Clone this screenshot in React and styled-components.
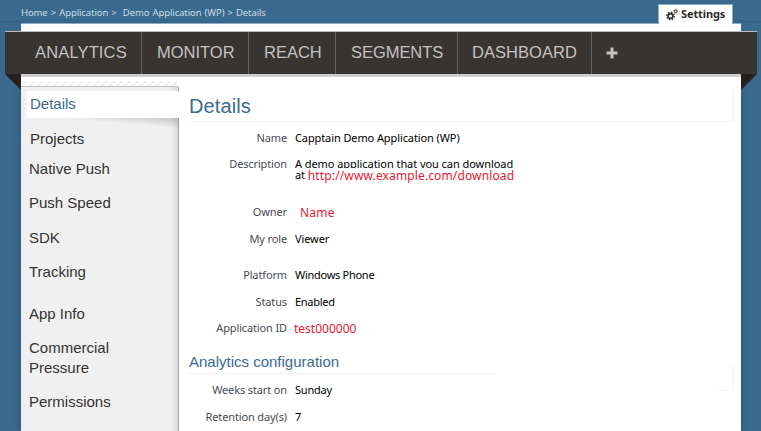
import React from 'react';
import styled, { createGlobalStyle } from 'styled-components';

const GlobalStyle = createGlobalStyle`
  * { box-sizing: border-box; }
  body { margin: 0; background: #3a6b8f; overflow: hidden; }
`;

const Screen = styled.div`
  width: 761px;
  height: 431px;
  overflow: hidden;
  display: flex;
  flex-direction: column;
  background: #3a6b8f;
  font-family: "Liberation Sans", Arial, sans-serif;
  color: #333;
`;

const TopBar = styled.header`
  height: 23px;
  flex: none;
  display: flex;
  justify-content: space-between;
  padding: 0 28px 0 21px;
  background: linear-gradient(#3a6b8f 19px, #34628a);
`;

const Breadcrumb = styled.nav`
  padding-top: 6px;
  font: 9.5px/14px "Noto Sans", sans-serif;
  color: #cbdbe6;
  white-space: pre;
  letter-spacing: -0.1px;
  word-spacing: 0.75px;
`;

const SettingsTab = styled.a`
  position: relative;
  z-index: 1;
  width: 75px;
  height: 20px;
  margin-top: 4px;
  display: flex;
  align-items: center;
  gap: 2px;
  padding-left: 7px;
  background: #fff;
  border: solid #8badc5;
  border-width: 1px 1px 0;
  font: bold 11px/18px "Noto Sans", sans-serif;
  letter-spacing: -0.1px;
  color: #2d2b2b;
`;

const TabText = styled.span`
  margin-top: -2px;
`;

const PageTop = styled.div`
  height: 8px;
  flex: none;
  margin: 0 20px 0 21px;
  background: #fff;
  border-top: 1px solid #8badc5;
`;

const Ribbon = styled.nav`
  position: relative;
  height: 43px;
  flex: none;
  margin: 0 4px 0 5px;
  padding-left: 8px;
  display: flex;
  background: #373432;
  border-top: 1px solid #b9bcbe;
`;

const RibbonItem = styled.a`
  width: ${p => p.$width}px;
  padding-left: ${p => p.$pad || 15}px;
  border-right: ${p => (p.$last ? '0' : '1px solid #686664')};
  font-size: 16.5px;
  line-height: 41px;
  letter-spacing: ${p => p.$spacing || 0}px;
  color: #c4c2c1;
  white-space: nowrap;
`;

const PlusIcon = styled.svg`
  display: block;
  margin-top: 15px;
`;

const Fold = styled.svg`
  position: absolute;
  top: 42px;
  ${p => p.$side}: 0;
`;

const Page = styled.main`
  flex: 1;
  margin: 0 20px 0 21px;
  display: flex;
  background: #fff;
  border-top: 3px solid #d0cfcf;
  box-shadow: 0 0 6px rgba(20, 50, 90, 0.5);
`;

const Sidebar = styled.aside`
  width: 158px;
  flex: none;
  display: flex;
  flex-direction: column;
  padding-top: 4px;
`;

const Hatch = styled.div`
  height: 6px;
  flex: none;
  margin-right: 1px;
  background: repeating-linear-gradient(135deg, #fff 0 2.8px, #f0f0f0 3.6px 5.6px);
  border-bottom: 1px solid #c0c0c0;
`;

const Menu = styled.div`
  flex: 1;
  padding-top: 4px;
  background: linear-gradient(90deg, transparent 149px, #d8d8d8 157px, #a9a9a9 157px), #f0f0f0;
`;

const MenuItem = styled.a`
  display: block;
  padding-left: ${p => p.$pad}px;
  margin-bottom: ${p => p.$gap}px;
  font-size: 15px;
  line-height: 20px;
  color: #333;
`;

const ActiveItem = styled.a`
  display: block;
  height: 27px;
  margin-left: 5px;
  padding-left: 4px;
  border-radius: 3px 0 0 3px;
  background: #fff;
  font-size: 15px;
  line-height: 26px;
  color: #3a6b8f;
`;

const ActiveShade = styled.div`
  height: 11px;
  margin-left: 30px;
  background: linear-gradient(to bottom left, rgba(90, 90, 90, .28), transparent 48%);
`;

const Content = styled.section`
  flex: 1;
  padding-left: 8px;
  font-family: "Noto Sans", sans-serif;
`;

const Title = styled.h1`
  width: 547px;
  height: 33px;
  margin: 12px 0 9px;
  padding-left: 2px;
  border: solid #f6f6f6;
  border-width: 0 2px 1px 0;
  font: 20px/35px "Liberation Sans", Arial, sans-serif;
  letter-spacing: 0.1px;
  color: #3a6b8f;
`;

const SectionHead = styled.div`
  width: 547px;
  height: 34px;
  margin: 14px 0 0;
  display: flex;
  align-items: flex-start;
  justify-content: space-between;
`;

const Subtitle = styled.h2`
  width: 310px;
  height: 25px;
  margin: 0;
  padding-left: 2px;
  border-bottom: 1px solid #f3f3f3;
  font: 15px/25px "Liberation Sans", Arial, sans-serif;
  color: #3a6b8f;
`;

const SectionEdge = styled.span`
  width: 20px;
  height: 26px;
  margin-top: 16px;
  border: solid #f6f6f6;
  border-width: 0 2px 1px 0;
`;

const Row = styled.div`
  display: grid;
  grid-template-columns: 100px 1fr;
  column-gap: 8px;
  height: ${p => p.$height}px;
  font-size: 11px;
  line-height: 14px;
`;

const Label = styled.span`
  text-align: right;
  white-space: nowrap;
  color: #484b52;
  letter-spacing: -0.13px;
`;

const Value = styled.span`
  white-space: nowrap;
  color: #000;
  letter-spacing: ${p => p.$spacing || -0.1}px;
`;

const ClippedLine = styled.div`
  height: 11px;
  line-height: 14px;
  overflow: hidden;
`;

const SecondLine = styled.div`
  height: 14px;
  line-height: 14px;
`;

const Accent = styled.span`
  font-size: 12px;
  line-height: 12px;
  vertical-align: -1px;
  color: #e81832;
  margin-left: ${p => p.$offset || 0}px;
  letter-spacing: ${p => p.$spacing || 0}px;
`;

function Gears() {
  return (
    <svg width="13" height="13" viewBox="0 0 13 13" fill="none" stroke="#373432">
      <circle cx="4.5" cy="8" r="2.4" strokeWidth="1.8" />
      <circle cx="4.5" cy="8" r="3.8" strokeWidth="1.3" strokeDasharray="1.5 1.485" />
      <circle cx="9.7" cy="3.3" r="1.3" strokeWidth="1" />
      <circle cx="9.7" cy="3.3" r="2" strokeWidth=".7" strokeDasharray=".8 .77" />
    </svg>
  );
}

const tabs = [
  ['ANALYTICS', 129, 22, 0.15],
  ['MONITOR', 107],
  ['REACH', 87],
  ['SEGMENTS', 122, 15, -0.05],
  ['DASHBOARD', 134, 14, 0.05],
];

const menu = [
  ['Projects', 10, 9],
  ['Native Push', 14, 8],
  ['Push Speed', 15, 8],
  ['SDK', 14, 8],
  ['Tracking', 22, 8],
  ['App Info', 14, 8],
  ['Commercial', 0, 8],
  ['Pressure', 14, 8],
  ['Permissions', 0, 8],
];

export default function App() {
  return (
    <Screen>
      <GlobalStyle />
      <TopBar>
        <Breadcrumb>{'Home > Application >  Demo Application (WP) > Details'}</Breadcrumb>
        <SettingsTab><Gears /><TabText>Settings</TabText></SettingsTab>
      </TopBar>
      <PageTop />
      <Ribbon>
        {tabs.map(([name, width, pad, spacing]) => (
          <RibbonItem key={name} $width={width} $pad={pad} $spacing={spacing}>{name}</RibbonItem>
        ))}
        <RibbonItem $width={60} $pad={14} $last>
          <PlusIcon width="12" height="12" viewBox="0 0 12 12" fill="#c4c2c1">
            <path d="M4.5 0.5h3v4h4v3h-4v4h-3v-4h-4v-3h4z" />
          </PlusIcon>
        </RibbonItem>
        <Fold $side="left" width="16" height="16" viewBox="0 0 16 16"><path d="M0 0H16V16Z" fill="#242120" /></Fold>
        <Fold $side="right" width="16" height="16" viewBox="0 0 16 16"><path d="M0 0H16L0 16Z" fill="#242120" /></Fold>
      </Ribbon>
      <Page>
        <Sidebar>
          <Hatch />
          <Menu>
            <ActiveItem>Details</ActiveItem>
            <ActiveShade />
            {menu.map(([name, gap, pad]) => (
              <MenuItem key={name} $gap={gap} $pad={pad}>{name}</MenuItem>
            ))}
          </Menu>
        </Sidebar>
        <Content>
          <Title>Details</Title>
          <Row $height={26}><Label>Name</Label><Value>Capptain Demo Application (WP)</Value></Row>
          <Row $height={48}>
            <Label>Description</Label>
            <Value $spacing={-0.06}>
              <ClippedLine>A demo application that you can download</ClippedLine>
              <SecondLine>at <Accent $spacing={0.13}>http://www.example.com/download</Accent></SecondLine>
            </Value>
          </Row>
          <Row $height={27}><Label>Owner</Label><Value><Accent $offset={5} $spacing={0.2}>Name</Accent></Value></Row>
          <Row $height={36}><Label>My role</Label><Value>Viewer</Value></Row>
          <Row $height={27}><Label>Platform</Label><Value $spacing={-0.28}>Windows Phone</Value></Row>
          <Row $height={26}><Label>Status</Label><Value $spacing={-0.28}>Enabled</Value></Row>
          <Row $height={14}><Label>Application ID</Label><Value><Accent $offset={-1}>test000000</Accent></Value></Row>
          <SectionHead><Subtitle>Analytics configuration</Subtitle><SectionEdge /></SectionHead>
          <Row $height={27}><Label>Weeks start on</Label><Value $spacing={-0.2}>Sunday</Value></Row>
          <Row $height={20}><Label>Retention day(s)</Label><Value>7</Value></Row>
        </Content>
      </Page>
    </Screen>
  );
}
